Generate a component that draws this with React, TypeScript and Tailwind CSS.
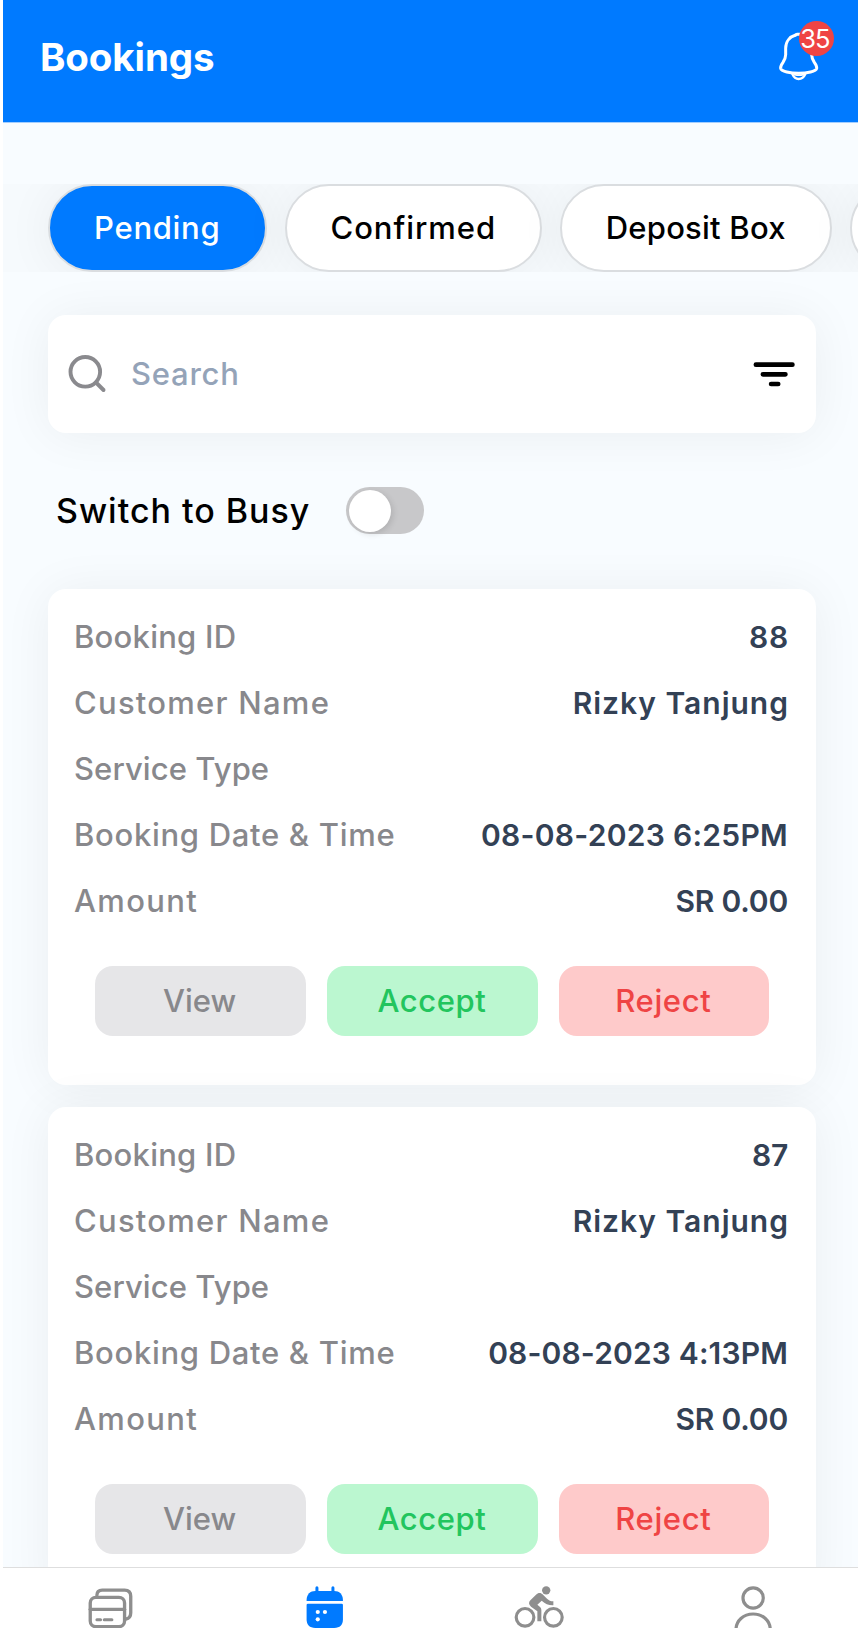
import type { ReactNode } from 'react';

type Field = { label: string; labelClass: string; value?: string; valueClass?: string };

const customerRow: Field = {
  label: 'Customer Name',
  labelClass: 'tracking-[1.25px]',
  value: 'Rizky Tanjung',
  valueClass: 'tracking-[1px] -mr-px',
};
const serviceRow: Field = { label: 'Service Type', labelClass: 'tracking-[0.08px]' };
const amountRow: Field = {
  label: 'Amount',
  labelClass: 'tracking-[1.35px]',
  value: 'SR 0.00',
  valueClass: 'tracking-[-0.19px]',
};

const bookings: Field[][] = [
  [
    { label: 'Booking ID', labelClass: 'tracking-[0.25px]', value: '88', valueClass: 'tracking-[0.8px] -mr-px' },
    customerRow,
    serviceRow,
    {
      label: 'Booking Date & Time',
      labelClass: 'tracking-[0.7px]',
      value: '08-08-2023 6:25PM',
      valueClass: 'tracking-[0.28px]',
    },
    amountRow,
  ],
  [
    { label: 'Booking ID', labelClass: 'tracking-[0.25px]', value: '87', valueClass: 'tracking-[-0.2px]' },
    customerRow,
    serviceRow,
    {
      label: 'Booking Date & Time',
      labelClass: 'tracking-[0.7px]',
      value: '08-08-2023 4:13PM',
      valueClass: 'tracking-[0.15px]',
    },
    amountRow,
  ],
];

function Header() {
  return (
    <header className="flex h-[123px] shrink-0 items-start justify-between border-b border-[#a3ceff] bg-[#007aff] pt-[30px] pr-[37px] pl-[37px]">
      <h1 className="text-[38.5px] leading-[54px] font-bold tracking-[-0.11px] text-white">Bookings</h1>
      <div className="relative h-[52px] w-[44px]">
        <svg
          className="h-[52px] w-[44px]"
          viewBox="650 90 132 156"
          fill="none"
          stroke="#fff"
          strokeWidth="9"
          strokeLinecap="round"
          strokeLinejoin="round"
        >
          <path d="M706 105C688 110 676 125 676 145V164C676 173 673 179 668 187C663 194 660 199 661 205C663 214 690 220 715 220S767 214 769 205C770 199 767 194 762 187C757 179 754 173 754 164V145C754 125 743 110 725 105" />
          <path d="M706 105L710 103H722L725 105" />
          <path strokeWidth="7" d="M696 222C700 231 707 237 715 237S731 231 735 222" />
          <path strokeWidth="5" d="M703 224C711 226 721 226 729 224" />
        </svg>
        <span className="absolute top-[-9px] left-[22px] flex size-[35px] items-center justify-center rounded-full bg-[#ef4444] text-[25.5px] leading-[35px] tracking-[-0.8px] text-white">
          <span className="-ml-[3px]">35</span>
        </span>
      </div>
    </header>
  );
}

function Tab({ className, children }: { className: string; children?: ReactNode }) {
  return (
    <button
      className={`flex h-[88px] shrink-0 items-center justify-center rounded-full border-2 border-[#dadde0] pb-px text-[31px] leading-[36px] font-medium shadow-[0_2px_50px_rgba(0,0,0,0.06)] ${className}`}
    >
      {children}
    </button>
  );
}

function SearchBar() {
  return (
    <div className="mt-[43px] mr-[42px] ml-[45px] flex h-[118px] shrink-0 items-center rounded-[18px] bg-white pr-[21px] pl-[19px] shadow-[0_2px_50px_rgba(0,0,0,0.06)]">
      <svg className="h-[40px] w-[40px]" viewBox="0 0 40 40" fill="none" stroke="#8a8a8e" strokeWidth="3.9" strokeLinecap="round">
        <circle cx="18.3" cy="17.8" r="14.8" />
        <path d="M29 28.5L36.5 36" />
      </svg>
      <span className="ml-[24px] flex-1 text-[31px] leading-[36px] font-medium tracking-[0.75px] text-[#94a3b8]">Search</span>
      <svg className="h-[26px] w-[42px]" viewBox="0 0 42 26" stroke="#000" strokeWidth="4.7" strokeLinecap="round">
        <path d="M2.900 3.700H39.400M9.900 13.300H32.400M18.100 23H25.200" />
      </svg>
    </div>
  );
}

function BookingCard({ fields }: { fields: Field[] }) {
  return (
    <article className="h-[496px] shrink-0 rounded-[18px] bg-white px-[26px] pt-[15px] shadow-[0_2px_50px_rgba(0,0,0,0.06)]">
      {fields.map((f) => (
        <div key={f.label} className="flex h-[66px] items-center justify-between pr-[2px] leading-[36px]">
          <span className={`text-[31px] font-medium whitespace-nowrap text-[#88888c] ${f.labelClass}`}>{f.label}</span>
          {f.value && (
            <span className={`text-[30px] font-semibold whitespace-nowrap text-[#334155] ${f.valueClass}`}>{f.value}</span>
          )}
        </div>
      ))}
      <div className="mt-[32px] flex gap-[21px] px-[21px] text-[31px] leading-[36px] font-medium">
        <button className="h-[70.5px] flex-1 rounded-[18px] bg-[#e6e6e8] pr-[2px] tracking-[0px] text-[#88888c]">View</button>
        <button className="h-[70.5px] flex-1 rounded-[18px] bg-[#bbf7d0] pr-px tracking-[0.6px] text-[#22c55e]">Accept</button>
        <button className="h-[70.5px] flex-1 rounded-[18px] bg-[#fecaca] pr-px tracking-[0.6px] text-[#ef4444]">Reject</button>
      </div>
    </article>
  );
}

function BottomNav() {
  return (
    <nav className="grid h-[61px] w-[857px] shrink-0 grid-cols-4 justify-items-center border-t border-[#dedede] bg-white pt-[12px]">
      <svg className="h-[48px] w-[50px]" viewBox="255.3 120 150 144" fill="none" stroke="#8e8e8e" strokeWidth="10" strokeLinecap="round">
        <rect x="271" y="172" width="103" height="88" rx="17" />
        <path d="M271 208H374" />
        <path d="M291 166C291 155 297 150.500 307 150.500H374C386 150.500 392.500 157 392.500 169V218C392.500 229 388 235 378 237" />
        <path strokeWidth="9" d="M291 239.500H302M313 239.500H336" />
      </svg>
      <svg className="h-[48px] w-[50px]" viewBox="897.2 120 150 144" fill="#007aff">
        <path d="M920 183V180C920 163 931 153 946 153H1003C1018 153 1029 163 1029 180V183Z" />
        <path d="M920 195Q920 191 924 191H1025Q1029 191 1029 195V238C1029 255 1020 264 1003 264H946C929 264 920 255 920 238Z" />
        <path d="M951 143V158M999 143V158" stroke="#007aff" strokeWidth="9" strokeLinecap="round" />
        <g fill="#fff">
          <circle cx="953.500" cy="216" r="6.300" />
          <circle cx="975" cy="216" r="6.300" />
          <circle cx="953.500" cy="238" r="6.300" />
        </g>
      </svg>
      <svg className="h-[48px] w-[50px]" viewBox="250.9 120 150 144" fill="#8e8e8e">
        <g fill="none" stroke="#8e8e8e" strokeWidth="9.500">
          <circle cx="284" cy="232" r="26.500" />
          <circle cx="369" cy="232" r="26.500" />
        </g>
        <circle cx="347.500" cy="151" r="12.500" />
        <path d="M300 181L317 164C324 157 332 158 338 164L350 176C355 181 361 184 369 184V195.500C355 196 345 192 334 182L321 194L329 201C332 204 333 207 333 211V244H321V214L302 200C295 194 294 187 300 181Z" />
      </svg>
      <svg className="h-[48px] w-[50px]" viewBox="893.6 120 150 144" fill="none" stroke="#8e8e8e" strokeWidth="9.500">
        <circle cx="969" cy="174" r="30.500" />
        <path d="M917.500 270C917.500 242 940 222 969 222S1020.500 242 1020.500 270" />
      </svg>
    </nav>
  );
}

export default function App() {
  return (
    <div className="flex h-[1628px] w-[858px] flex-col overflow-hidden bg-white pl-[3px] font-['Inter',sans-serif]">
      <Header />
      <main className="flex min-h-0 flex-1 flex-col overflow-hidden bg-[#f8fcff]">
        <div className="mt-[61px] flex h-[88px] shrink-0 gap-[18.5px] overflow-hidden bg-[#f6fafd] pl-[45px]">
          <Tab className="w-[218.5px] bg-[#007aff] tracking-[0.7px] text-white">Pending</Tab>
          <Tab className="w-[256.5px] bg-white tracking-[0.94px] text-black">Confirmed</Tab>
          <Tab className="w-[271.5px] bg-white tracking-[0.23px] text-black">Deposit Box</Tab>
          <Tab className="w-[240px] bg-white text-black" />
        </div>
        <SearchBar />
        <div className="mt-[54px] flex h-[47px] shrink-0 items-center pl-[53px]">
          <span className="w-[290px] text-[34px] leading-[48px] font-medium tracking-[0.98px] whitespace-nowrap text-black">
            Switch to Busy
          </span>
          <button role="switch" aria-checked="false" className="flex h-[47px] w-[78px] items-center rounded-full bg-[#c8c8ca] pl-[2.5px]">
            <span className="size-[42px] rounded-full bg-white shadow-[2px_2px_6px_rgba(0,0,0,0.12)]" />
          </button>
        </div>
        <div className="mt-[54.5px] flex flex-col gap-[22px] pr-[42px] pl-[45px]">
          {bookings.map((fields) => (
            <BookingCard key={fields[0].value} fields={fields} />
          ))}
        </div>
      </main>
      <BottomNav />
    </div>
  );
}
